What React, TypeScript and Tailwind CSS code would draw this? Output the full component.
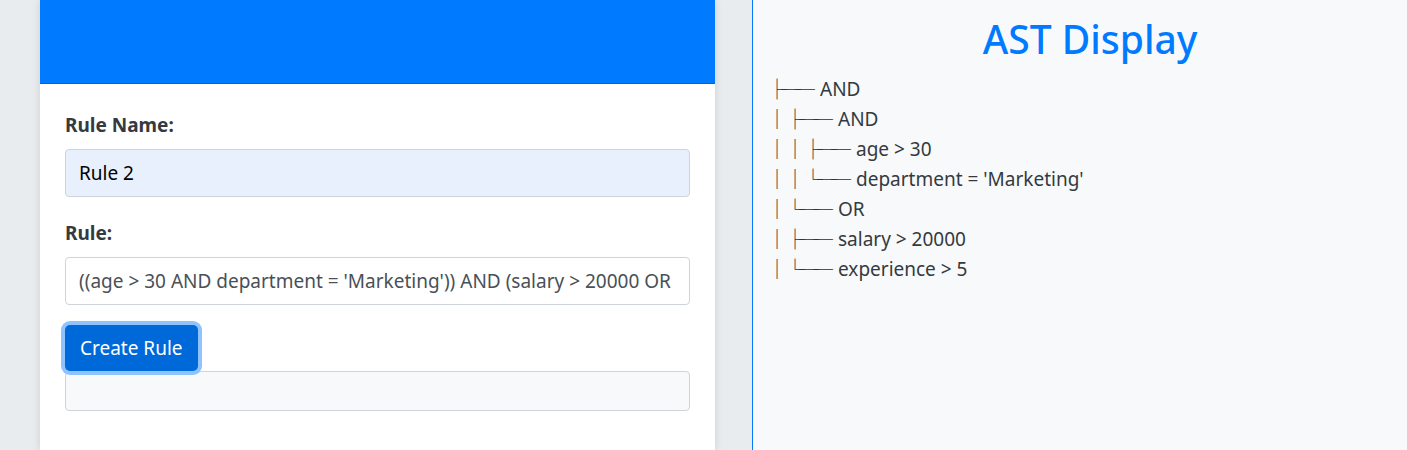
import React from "react";

type TreeLine = { bars: boolean[]; branch: string; label: string };

const treeLines: TreeLine[] = [
  { bars: [], branch: "├──", label: "AND" },
  { bars: [true], branch: "├──", label: "AND" },
  { bars: [true, true], branch: "├──", label: "age > 30" },
  { bars: [true, true], branch: "└──", label: "department = 'Marketing'" },
  { bars: [true], branch: "└──", label: "OR" },
  { bars: [true], branch: "├──", label: "salary > 20000" },
  { bars: [true], branch: "└──", label: "experience > 5" },
];

const boxFont =
  "font-['Noto_Sans_CJK_SC',monospace] font-bold text-[20px] leading-none tracking-[-6px] text-[#2b2f33]";

const AstTree = () => (
  <div className="pl-[14px] text-[#343a40]">
    {treeLines.map((line, i) => (
      <div key={i} className="flex items-center h-[30px]">
        {line.bars.map((bar, j) => (
          <span key={j} className={`w-[18px] shrink-0 ${boxFont}`}>
            {bar ? "│" : ""}
          </span>
        ))}
        <span className={`w-[53px] shrink-0 whitespace-nowrap ${boxFont}`}>{line.branch}</span>
        <span className="text-[19px]">{line.label}</span>
      </div>
    ))}
  </div>
);

export default function App() {
  return (
    <div className="flex h-[450px] w-full overflow-hidden bg-[#e9ecef] font-['Noto_Sans',sans-serif] text-[#212529]">
      <div className="pl-10 pr-[37px] shrink-0">
        <div className="w-[675px] h-full bg-white shadow-[0_0_8px_rgba(0,0,0,0.12)]">
          <div className="h-[84px] bg-[#007bff] border-b border-[#0069d9]" />
          <form className="px-[25px] pt-[29px]" onSubmit={(e) => e.preventDefault()}>
            <label className="block font-bold text-[19px] leading-6 text-[#343a40] mb-3">
              Rule Name:
            </label>
            <input
              className="block w-full h-[48px] px-[13px] rounded border border-[#ced4da] bg-[#e8f0fe] text-[19px] text-black outline-none"
              defaultValue="Rule 2"
            />
            <label className="block font-bold text-[19px] leading-6 text-[#343a40] mt-6 mb-3">
              Rule:
            </label>
            <input
              className="block w-full h-[48px] px-[13px] rounded border border-[#ced4da] bg-white text-[19px] text-[#495057] outline-none"
              defaultValue="((age > 30 AND department = 'Marketing')) AND (salary > 20000 OR experience > 5)"
            />
            <button
              type="submit"
              className="mt-5 h-[46px] px-[15px] rounded-[5px] bg-[#0069d9] text-white text-[19px] ring-4 ring-[#8fc3fd]"
            >
              Create Rule
            </button>
            <div className="h-[40px] rounded border border-[#ced4da] bg-[#f8f9fa]" />
          </form>
        </div>
      </div>
      <div className="flex-1 bg-[#f8f9fa] border-l border-[#007bff]">
        <h1 className="pt-[15px] pl-5 mb-[11px] text-center text-[39px] leading-[48px] font-medium text-[#007bff]">
          AST Display
        </h1>
        <AstTree />
      </div>
    </div>
  );
}
